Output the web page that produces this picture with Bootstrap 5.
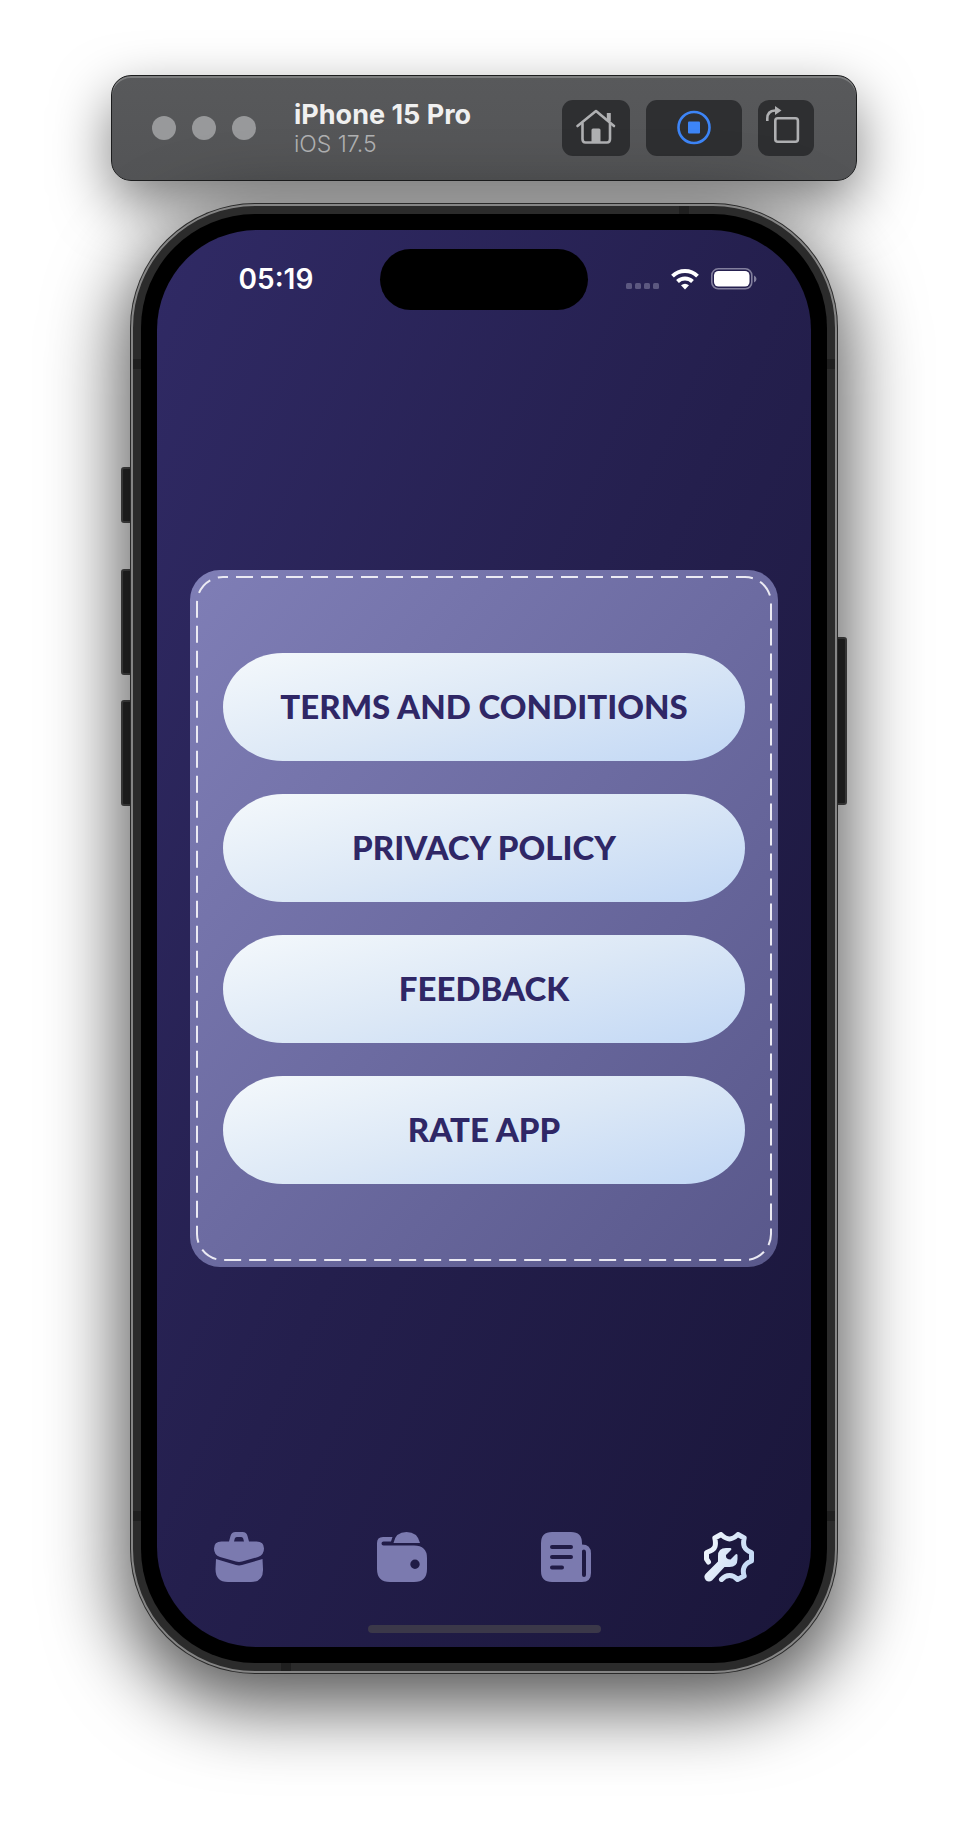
<!DOCTYPE html>
<html lang="en">
<head>
<meta charset="utf-8">
<meta name="viewport" content="width=device-width, initial-scale=1">
<title>iPhone 15 Pro</title>
<link href="https://cdn.jsdelivr.net/npm/bootstrap@5.3.0/dist/css/bootstrap.min.css" rel="stylesheet">
<style>
body { background: #fff; font-family: Inter, "Liberation Sans", sans-serif; }
.sim { max-width: 746px; padding: 75px 0 152px; }
.sim-bar {
  background: linear-gradient(#58595b, #535456); min-height: 106px; padding: 0 42px 0 40px; border-radius: 20px;
  border: 1px solid #1c1d1e; box-shadow: inset 0 2px 0 #7d7e7f, 0 22px 56px rgba(0,0,0,.5);
}
.sim-dot { width: 24px; height: 24px; background: #98999b; }
.sim-title { margin-left: 38px; padding-top: 2px; }
.sim-name { font-size: 27px; line-height: 30px; font-weight: 700; color: #f0f0f0; }
.sim-os { font-size: 23px; line-height: 28px; font-weight: 300; color: #b0b1b2; }
.sim-btn { height: 56px; border: 0; border-radius: 11px; background: #2e2f31; }
.phone { max-width: 706px; width: 95%; margin-top: 23px; aspect-ratio: 706 / 1469; z-index: 0; }
.phone-shell {
  padding: 8px; border: 2px solid #858585; border-radius: 124px; background: #2b2b2b;
  box-shadow: 0 0 0 1px #2a2a2a, 0 24px 74px 10px rgba(0,0,0,.66);
}
.phone-bezel { padding: 16px; border-radius: 114px; background: #000; }
.screen { border-radius: 100px; background: linear-gradient(to bottom right, #302a65 0%, #241f4d 50%, #1a163a 100%); }
.side-key { z-index: -1; width: 12px; background: #2b2b2b; border: 2px solid #505050; border-radius: 3px; }
.key-l { left: -10px; } .key-r { right: -10px; }
.band { background: #1f1f1f; }
.band-v { width: 10px; height: 8px; } .band-h { width: 8px; height: 10px; }
.status { display: grid; grid-template-columns: 1fr 208px 1fr; padding-top: 19px; color: #fff; }
.clock { font-size: 28px; line-height: 32px; font-weight: 600; padding: 0 0 2px 15px; }
.island { height: 61px; border-radius: 31px; background: #000; }
.status-icons { padding-right: 54px; gap: 12px; }
.menu-card { margin: 0 33px; padding: 83px 33px; gap: 33px; border-radius: 30px; background: linear-gradient(to bottom right, #7f7eb6 0%, #6c6ba1 50%, #59588b 100%); }
.stitch { width: calc(100% - 14px); height: calc(100% - 14px); }
.pill { height: 108px; border: 0; border-radius: 60px / 54px; background: linear-gradient(165deg, #f2f7fb 5%, #dce8f6 50%, #c4d9f5 95%); color: #2f2766; font-family: Lato, sans-serif; font-weight: 900; font-size: 33px; }
.tabs { padding-top: 6px; }
.home-line { width: 233px; height: 8px; background: #3b3849; margin: 43px auto 14px; }
svg { display: block; }
</style>
</head>
<body>
<div class="sim container-fluid">
  <header class="sim-bar d-flex align-items-center">
    <div class="d-flex gap-3" aria-hidden="true">
      <span class="sim-dot rounded-circle"></span><span class="sim-dot rounded-circle"></span><span class="sim-dot rounded-circle"></span>
    </div>
    <div class="sim-title">
      <div class="sim-name">iPhone 15 Pro</div>
      <div class="sim-os">iOS 17.5</div>
    </div>
    <div class="d-flex gap-3 ms-auto">
      <button class="sim-btn p-0" aria-label="Home" style="width:68px">
        <svg class="mx-auto" width="44" height="42" viewBox="0 0 44 42" fill="none" stroke="#afb0b2" stroke-width="2.600" stroke-linecap="round" stroke-linejoin="round"><path d="M3.500 19 22 4l18 15"/><path d="M8.500 16.500V32q0 3.500 3 3.500h21.500q3 0 3-3.500V16.500"/><path d="M34.800 6v8" stroke-width="4" stroke-linecap="butt"/><path d="M17.500 35.500V23q0-1.500 1.500-1.500h6q1.500 0 1.500 1.500v12.500z" fill="#afb0b2" stroke="none"/></svg>
      </button>
      <button class="sim-btn p-0" aria-label="Stop" style="width:96px">
        <svg class="mx-auto" width="36" height="36" viewBox="0 0 36 36"><circle cx="18" cy="17.500" r="15.500" fill="none" stroke="#3d85f7" stroke-width="2.600"/><rect x="12" y="11.500" width="12" height="12" rx="1" fill="#3d85f7"/></svg>
      </button>
      <button class="sim-btn p-0" aria-label="Rotate" style="width:56px">
        <svg class="mx-auto" width="40" height="44" viewBox="0 0 40 44" fill="none" stroke="#afb0b2" stroke-width="2.600"><rect x="9.300" y="12.300" width="22.600" height="23.400" rx="2.500"/><path d="M1.300 15v-2.500Q1.300 5 9 4.500"/><path d="M9 0v9l6.500-4.500z" fill="#afb0b2" stroke="none"/></svg>
      </button>
    </div>
  </header>

  <div class="phone mx-auto position-relative d-flex flex-column">
    <i class="side-key key-l position-absolute" style="top:263px;height:56px"></i>
    <i class="side-key key-l position-absolute" style="top:365px;height:106px"></i>
    <i class="side-key key-l position-absolute" style="top:496px;height:106px"></i>
    <i class="side-key key-r position-absolute" style="top:433px;height:168px"></i>
    <div class="phone-shell flex-grow-1 d-flex flex-column">
      <i class="band band-v position-absolute" style="top:2px;right:148px"></i>
      <i class="band band-v position-absolute" style="bottom:2px;left:150px"></i>
      <i class="band band-h position-absolute" style="top:155px;left:2px"></i>
      <i class="band band-h position-absolute" style="top:155px;right:2px"></i>
      <i class="band band-h position-absolute" style="bottom:152px;left:2px"></i>
      <i class="band band-h position-absolute" style="bottom:152px;right:2px"></i>
      <div class="phone-bezel flex-grow-1 d-flex flex-column">
        <div class="screen flex-grow-1 d-flex flex-column">
          <div class="status align-items-center">
            <div class="clock text-center">05:19</div>
            <div class="island"></div>
            <div class="status-icons d-flex align-items-center justify-content-end">
              <svg width="33" height="20" viewBox="0 0 33 20" fill="#5c5880"><rect y="13" width="6" height="6" rx="1.500"/><rect x="9" y="13" width="6" height="6" rx="1.500"/><rect x="18" y="13" width="6" height="6" rx="1.500"/><rect x="27" y="13" width="6" height="6" rx="1.500"/></svg>
              <svg width="28" height="22" viewBox="0 0 28 22" fill="none" stroke="#fff" stroke-width="4"><path d="M1.500 7.100a18 18 0 0 1 25 0"/><path d="M6.500 12.500a10.800 10.800 0 0 1 15 0"/><path d="M14 20.500l-4-4.200q4-3.200 8 0z" fill="#fff" stroke="none"/></svg>
              <svg width="46" height="24" viewBox="0 0 46 24"><rect x=".8" y=".8" width="40" height="20" rx="6.500" fill="none" stroke="#827f9d" stroke-width="1.600"/><rect x="3" y="3" width="35.500" height="15.500" rx="4.500" fill="#fff"/><path d="M43 7.500q2.500 1 2.500 3.500T43 14.500z" fill="#827f9d"/></svg>
            </div>
          </div>
          <main class="flex-grow-1 d-flex flex-column justify-content-center">
            <div class="menu-card position-relative d-flex flex-column">
              <svg class="position-absolute top-0 start-0 w-100 h-100 pe-none" aria-hidden="true"><rect class="stitch" x="7" y="7" rx="26" fill="none" stroke="#ebeaf3" stroke-width="2" stroke-dasharray="17 8" stroke-dashoffset="12"/></svg>
              <button class="pill p-0">TERMS AND CONDITIONS</button>
              <button class="pill p-0">PRIVACY POLICY</button>
              <button class="pill p-0">FEEDBACK</button>
              <button class="pill p-0">RATE APP</button>
            </div>
          </main>
          <nav class="tabs row g-0" aria-label="Tabs">
            <a class="col" href="#work" aria-label="Work"><svg class="mx-auto" width="50" height="50" viewBox="0 0 50 50" fill="#7b7aaf"><path fill-rule="evenodd" d="M15 9.500 16.500 4Q17.500 0 21.500 0h7q4 0 5 4L35 9.500h7.500Q50 9.500 50 16.500 50 23 44 25L28 29.600q-3 .8-6 0L6 25Q0 23 0 16.500 0 9.500 7.500 9.500zM20 9.500h10l-.8-3q-.4-1.500-2-1.500h-4.400q-1.600 0-2 1.500z"/><path d="M2 27l20 6q3 .8 6 0l20.500-6 .5 10q.5 13-12 13H14Q1.500 50 1.500 37z"/></svg></a>
            <a class="col" href="#wallet" aria-label="Wallet"><svg class="mx-auto" width="50" height="50" viewBox="0 0 50 50" fill="#7b7aaf"><path fill-rule="evenodd" d="M6 5h9.500L14 9.500H6.500q-2 0-2 2t2 2H37Q50 13.500 50 26v11q0 13-13 13H13Q0 50 0 37V11Q0 5 6 5zm32 22.500a4.700 4.700 0 1 0 0 9.400 4.700 4.700 0 1 0 0-9.400z"/><path d="M16.500 11Q18.500 0 29.500 0T43 11z"/></svg></a>
            <a class="col" href="#news" aria-label="News"><svg class="mx-auto" width="50" height="50" viewBox="0 0 50 50"><path fill="#7b7aaf" fill-rule="evenodd" d="M11 0h19q11 0 11 11v1.500q9 0 9 9V41q0 9-9 9H11Q0 50 0 39V11Q0 0 11 0zm30 19v24q0 2 2 2t2-2V20q0-2.500-2-2.500T41 19z"/><path d="M11 15h19M11 25h19M11 35.500h10" fill="none" stroke="#211c46" stroke-width="4" stroke-linecap="round"/></svg></a>
            <a class="col" href="#settings" aria-label="Settings" aria-current="page"><svg class="mx-auto" width="50" height="50" viewBox="0 0 50 50"><defs><linearGradient id="ice" x1="0" y1="0" x2="50" y2="20" gradientUnits="userSpaceOnUse"><stop stop-color="#f6f9fc"/><stop offset="1" stop-color="#c5daf5"/></linearGradient></defs><path fill="none" stroke="url(#ice)" stroke-width="5" stroke-linecap="round" stroke-linejoin="round" d="M4.500 30 2.500 27V20.500Q10 18 11 14.500 12 11 10.800 6L17 2.500Q22 7 25.500 7T34 2.500L40.200 6Q39 11 40.200 14.500 42 18.500 47.500 20.500V29Q42 31 40.200 35T40.200 44L33.500 47.500Q30 43.500 25.500 43.500T17.500 47.500"/><path fill="url(#ice)" d="M1.500 42 14 29.500V24Q14 16 22 16h4.500q1.500.5.500 2l-5 5q-.5 4.500 4.500 4.500l5-5q1.500-1 2 .5V27q0 8-8 8h-5L8 48.500q-3 2-6 0-3-3.500-.5-6.500z"/></svg></a>
          </nav>
          <div class="home-line rounded-pill"></div>
        </div>
      </div>
    </div>
  </div>
</div>
<script src="https://cdn.jsdelivr.net/npm/bootstrap@5.3.0/dist/js/bootstrap.bundle.min.js"></script>
</body>
</html>
